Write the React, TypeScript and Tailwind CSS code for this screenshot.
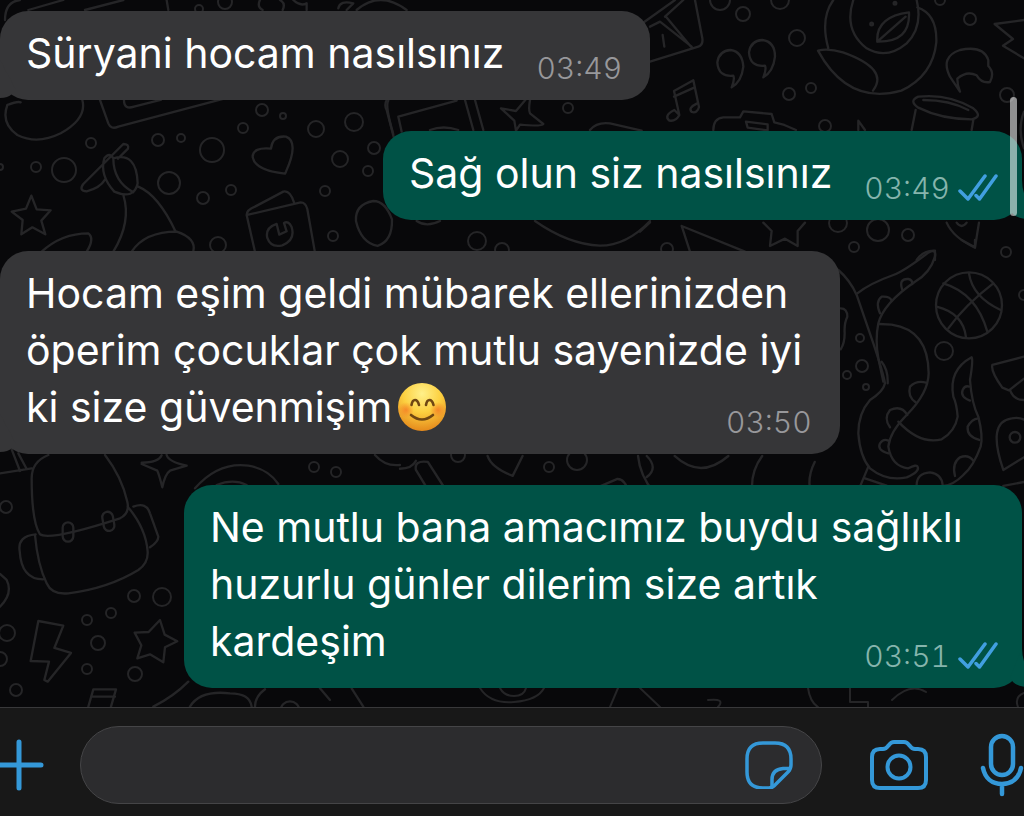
import type { ReactNode } from 'react';

interface Message {
  id: number;
  text: string;
  time: string;
  sent: boolean;
  smile?: boolean;
}

const MESSAGES: Message[] = [
  { id: 1, text: 'Süryani hocam nasılsınız', time: '03:49', sent: false },
  { id: 2, text: 'Sağ olun siz nasılsınız', time: '03:49', sent: true },
  {
    id: 3,
    text: 'Hocam eşim geldi mübarek ellerinizden öperim çocuklar çok mutlu sayenizde iyi ki size güvenmişim',
    time: '03:50',
    sent: false,
    smile: true,
  },
  {
    id: 4,
    text: 'Ne mutlu bana amacımız buydu sağlıklı huzurlu günler dilerim size artık kardeşim',
    time: '03:51',
    sent: true,
  },
];

// [cx, cy, r]
const BUBBLES = [
  [91, 143, 5], [158, 140, 6], [181, 138, 4], [212, 150, 12], [243, 128, 5], [262, 110, 6],
  [283, 116, 3], [316, 129, 8], [354, 122, 9], [374, 148, 6], [340, 159, 8], [368, 171, 5],
  [325, 191, 5], [333, 236, 5], [169, 183, 11], [203, 198, 6], [231, 190, 5], [36, 167, 5],
  [64, 170, 12], [0, 167, 3], [218, 245, 8], [225, 2, 7], [199, 9, 4], [568, 108, 5],
  [743, 14, 7], [797, 38, 8], [789, 94, 6], [811, 88, 5], [825, 126, 6], [970, 19, 6],
  [1007, 95, 7], [720, 0, 10], [780, 0, 9], [940, 0, 5], [878, 230, 11], [908, 235, 6],
  [854, 247, 5], [838, 223, 9], [1006, 252, 5], [667, 249, 6], [477, 241, 9], [502, 250, 7],
  [860, 338, 4], [862, 366, 6], [847, 375, 4], [866, 387, 3], [944, 351, 9], [1024, 295, 5],
  [314, 467, 5], [336, 472, 5], [6, 507, 6], [134, 596, 6], [162, 597, 9], [111, 613, 5],
  [87, 620, 5], [98, 643, 7], [87, 669, 5], [135, 674, 7], [7, 633, 8], [0, 659, 7],
  [16, 690, 6], [549, 467, 5], [577, 460, 10], [458, 455, 7],
];

function Wallpaper() {
  return (
    <svg
      className="absolute inset-0 h-full w-full"
      fill="none"
      stroke="#252527"
      strokeWidth="2"
      strokeLinecap="round"
      strokeLinejoin="round"
      aria-hidden="true"
    >
      {BUBBLES.map(([cx, cy, r]) => (
        <circle key={`${cx}-${cy}`} cx={cx} cy={cy} r={r} />
      ))}

      {/* top left */}
      <g transform="scale(.3333)" strokeWidth="7">
        <path d="M15 60Q15 5 60 0M85 30L190 0M255 30L370 0M500 0l5 30M780 0q-10 20 8 30M840 0q18 10 8 30M880 0q20 20 40 10v20M1015 25q5-25 45-15l-20 20M1070 30q70-60 150 0" />
        <path d="M22 315q-20 55 30 90 60 30 130-5 80-45 65-100M22 315q30-12 40-8M300 300l25 70q8 20 30 10l320-85M372 300q0 30 30 20l80-20" />
        <path d="M855 521q-90-10-97-50 0-30 55-25 5-40 45-36 40 15 0 105z" />
        <path d="M94 587l16 41 42 3-28 31 12 41-39-21-33 21 4-43-33-25 43-9z" />
        <path d="M250 552L370 432q18 0 14 14l-30 30M250 552q-15 20 10 22 40-10 55-35M340 475q70-20 73 75-10 50-70 25-45-50-30-100 15-20 27 0 0 70 60 102M370 585q25 80-30 170M415 560q60 25 112 135M395 755q40-60 135-60 60 20 50 60M125 755q60-55 140-55 20 15-5 55" />
        <path d="M765 755l-25-110q0-15 25-25l85-45q20-5 32 32M742 645l160-38q15 0 20 20l22 125M830 672q-35 12-28 42 10 30 45 22 40-15 28-55-10-20-23-12l8 25-22 10z" />
        <path d="M1120 603q-55 10-52 60 15 65 65 75 45-15 43-80-20-55-56-55zM1165 302q-10 15 15 100" />
      </g>

      {/* top right */}
      <g transform="translate(640 0) scale(.3333)" strokeWidth="7">
        <path d="M30 185l145-45q15-5 12-25L165 0M0 75L105 0M30 80l30-15 95 75M75 50l55-50M78 50l75 90M68 105l5 35" />
        <path d="M275 262q10-25 5-35-45 5-48-40 5-35 40-37 35 5 38 50-5 45-35 62zM370 232q10-25 5-35-45 5-48-40 5-35 40-37 38 5 38 50-5 45-35 62z" />
        <path d="M118 345l-16-72 58-32 17 80q-5 20-22 15-12-12 15-25M102 290l62-28M118 345q-10 20-30 17-18-15 15-32z" />
        <path d="M220 390q0-35 30-38h50l10-18 85 8 8 25 30 8 35 15M318 365l65 8v18l-60-8zM655 390v-28l20 28" />
        <path d="M565 145q-25-90 15-145M640 0q-30 90 40 145 60 35 120-15 50-50 30-130M712 125q-5-75 95-88 5 90-95 88zl85-75M832 22q60 20 57 105-10 100-105 145-160 45-250-120 30-8 75 5 140 50 90 115" />
        <circle cx="765" cy="10" r="4" />
        <circle cx="695" cy="72" r="4" />
        <path d="M960 275l-30-45q-30-60 30-80 70-15 85 30v18q20 20 5 48-25 5-40-20-30-15-58 10 0 20 8 39zM1152 60l-88 12 55 45-30 20 63 38" />
        <path d="M835 290q90-10 165 35 30 25-5 33-90 0-160-35-30-20 0-33zM850 300q80 0 135 30M815 390l12-60M995 390l5-30M1152 335q-20 50 0 110" />
        <path d="M0 695l30-28M150 755l-25-77 190 77M370 668l25 25-5 45 45-22 38 22v-45l22-25M920 668q20 45 85 75l12-75M980 668q-15 20-30 0M830 780q20-30 55-28v28" />
      </g>

      {/* gap under the first bubble */}
      <g transform="translate(360 80) scale(.3333)" strokeWidth="7">
        <path d="M80 60q-8 15 0 30l22 85M125 155l-10-45 175-48M315 60l25 90M345 60l25 90M210 150q40-15 85 0M510 60q-5 30 0 40l40 32q-5 8-70 2l-12 18-5-30-40-37 45 8 28-33M690 150q20-25 60-20l95 22" />
      </g>

      {/* gap under the second bubble */}
      <g transform="translate(400 205) scale(.3333)" strokeWidth="7">
        <path d="M50 48q30 20 70 0M405 48q100 70 195 74 80 0 150-74" />
      </g>

      {/* octopus and basketball */}
      <g transform="translate(820 240) scale(.3333)" strokeWidth="7">
        <path d="M55 90Q90 120 110 165L160 310Q190 400 195 430 190 455 150 480 115 520 115 580 120 650 150 685 200 725 260 712 300 695 293 680 290 672 265 685 215 680 205 620 210 575 260 525 325 460 326 400 325 270 215 254L178 252" />
        <path d="M112 160Q150 130 220 105 250 95 325 38 350 25 345 50 330 100 285 125 190 190 175 250 165 300 175 355L190 425M185 365Q205 390 203 430" />
        <path d="M235 545Q300 615 365 598 405 575 413 530 410 490 400 470 385 390 455 352 460 360 450 420 455 490 475 530 490 590 482 620 460 680 430 705 400 735 370 738" />
        <path d="M247 150Q235 115 265 117 278 120 277 132M180 220Q165 185 185 170 210 168 215 182M287 487Q262 470 270 440 290 420 318 428M210 562Q190 535 210 510 245 495 262 525M205 640Q170 630 180 610 190 595 205 602M450 482Q420 470 428 450 435 435 448 440M478 600Q440 590 443 560 455 537 475 535M405 708Q395 670 420 652 445 642 460 662" />
        <path d="M290 735q0-35 40-38 35 5 38 38M145 680l-25 60M135 715l65 22" />
        <circle cx="447" cy="196" r="99" />
        <path d="M447 100q10 70 95 110M370 130q100 30 132 145M385 265q50-70 135-135M350 200q80 20 88 92" />
        <path d="M612 350l-95 25q-5 20 30 68l20 8 45-35M570 450q10 30 42 30M550 690q-50-145 25-155 30-5 45 10M550 690l65-40" />
        <circle cx="585" cy="592" r="16" />
        <path d="M62 205q20 0 20 25-10 20-8 50 0 30-12 48M425 0l40 22V0M550 738l62-12" />
      </g>

      {/* backpack, bolt and star */}
      <g transform="translate(0 440) scale(.3333)" strokeWidth="7">
        <path d="M145 45q-50 20-50 70 0 130 25 168 30 20 240-48 30-15 22-50Q365 110 315 45M105 285q8 90 35 145 15 35 65 30 120-15 210-70 30-20 28-55-5-70-60-135M107 283q-55 5-48 50 5 85 70 85M400 200q40-15 50 20l25 70q0 15-25 32M0 100l95-15M35 28l25 65M55 40l25 47" />
        <rect x="188" y="247" width="32" height="58" rx="16" />
        <rect x="309" y="215" width="32" height="58" rx="16" transform="rotate(-10 325 244)" />
        <path d="M425 68q50 0 60-22M500 45q5 20 60 32l-50 15q-15 10-23 50-10-40-15-50l-47-20M585 145q70-80 160-68 60 10 90 55M650 135q50-20 90 0M0 500q40-40 20-80L0 402M1125 45q30 35 75 30" />
        <path d="M115 543l75 14-27 67 50 15-70 86-10-5 14-55-55-2z" />
        <path d="M480 540l14 44 38 20-37 18-5 45-40-24-38 12 12-39-20-38 42-2z" />
        <path d="M265 800l15-52h68l-15 52M275 770h70M460 800q60-30 105-75M570 800q30-50 120-40 60 0 65 40M765 800q0-30 30-52M960 745l30 35M1055 745l35 55" />
        <circle cx="870" cy="812" r="28" />
      </g>

      {/* gap above the last bubble */}
      <g transform="translate(400 450) scale(.398)" strokeWidth="6">
        <path d="M0 47q30 0 40-20M75 108L40 50q-5-25 30-20l50 78M220 15q10 30 63 50l25-50M470 105l75-32q20-2 30 35M598 15q5 50 40 92M620 15q30 30 0 53M690 15q65 60 135 0M910 15q-30 40-25 92M1042 30q-20 40-10 78" />
      </g>

      {/* strip over the input bar */}
      <path d="M480 688q10 16 34 14t30-14M500 688q4 8 14 8t12-8M610 707l8-19M640 688l20 19M708 700q18-2 10 7M808 688q2 14 10 19M850 688v14h18v5M892 700q18-18 34-8M1018 707q-4-10 6-14" />
    </svg>
  );
}

function Smile() {
  return (
    <svg className="-mt-2 ml-1.5 inline-block h-12 w-12 align-middle" viewBox="0 0 48 48" role="img" aria-label="😊">
      <defs>
        <radialGradient id="face" cx="50%" cy="22%" r="78%">
          <stop offset="0" stopColor="#fff08a" />
          <stop offset=".5" stopColor="#fcd040" />
          <stop offset="1" stopColor="#e58a1c" />
        </radialGradient>
        <radialGradient id="cheek">
          <stop offset="0" stopColor="#f57b25" stopOpacity=".8" />
          <stop offset="1" stopColor="#f57b25" stopOpacity="0" />
        </radialGradient>
      </defs>
      <circle cx="24" cy="24" r="24" fill="url(#face)" />
      <circle cx="8" cy="27" r="8" fill="url(#cheek)" />
      <circle cx="40" cy="27" r="8" fill="url(#cheek)" />
      <g fill="none" stroke="#6f4713" strokeWidth="2.6" strokeLinecap="round">
        <path d="M13.500 22q.8-5 3.500-5t4 5" />
        <path d="M28 22q.8-5 3.500-5t4 5" />
        <path d="M13 32q11 9 22 0" />
      </g>
    </svg>
  );
}

function Ticks() {
  return (
    <svg
      className="h-7 w-10"
      viewBox="0 0 40 28"
      fill="none"
      stroke="#419fe0"
      strokeWidth="3.500"
      strokeLinecap="round"
      strokeLinejoin="round"
      role="img"
      aria-label="Okundu"
    >
      <path d="M2 17l8 8L27 2M18 21.500l3.500 3.500L38 2" />
    </svg>
  );
}

function Tail({ sent }: { sent: boolean }) {
  return sent ? (
    <svg className="absolute -right-1 bottom-0 h-10 w-4" viewBox="0 0 16 40" fill="#005246" aria-hidden="true">
      <path d="M12 0q0 10 4 18v21q-9-1-13-5L0 30z" />
    </svg>
  ) : (
    <svg className="absolute bottom-0 left-0 h-10 w-4" viewBox="0 0 16 40" fill="#363638" aria-hidden="true">
      <path d="M0 0v38q8 0 12-4l4-4z" />
    </svg>
  );
}

function MessageBubble({ message }: { message: Message }) {
  const { text, time, sent, smile } = message;

  return (
    <li className={sent ? 'flex justify-end pr-0.5' : 'flex justify-start'}>
      <div
        className={`relative max-w-[82%] rounded-[28px] pt-[14px] pb-[18px] pl-[26px] ${
          sent ? 'bg-[#005246] pr-6' : 'bg-[#363638] pr-7'
        }`}
      >
        <Tail sent={sent} />
        <p className="relative text-[41px] leading-[57px] text-white">
          {text}
          {smile && <Smile />}
          {/* floats to the end of the last line */}
          <span
            className={`float-right mt-[31px] ml-8 flex h-6 items-center gap-2 text-[30px] leading-6 font-light tabular-nums ${
              sent ? 'text-[#86b5ad]' : 'text-[#98989b]'
            }`}
          >
            <time>{time}</time>
            {sent && <Ticks />}
          </span>
        </p>
      </div>
    </li>
  );
}

function IconButton({ label, className, children }: { label: string; className?: string; children: ReactNode }) {
  return (
    <button type="button" aria-label={label} className={`shrink-0 text-[#3498d8] ${className ?? ''}`}>
      {children}
    </button>
  );
}

function Composer() {
  return (
    <footer className="flex items-center border-t border-[#38383a] bg-[#181818] pt-[18px] pb-3">
      <IconButton label="Ekle" className="-ml-1.5">
        <svg className="h-[52px] w-[50px]" viewBox="0 0 50 52" stroke="currentColor" strokeWidth="5" strokeLinecap="round">
          <path d="M3 26h44M25 3v46" />
        </svg>
      </IconButton>
      <div className="ml-9 flex h-[78px] min-w-0 flex-1 items-center rounded-full border border-[#454547] bg-[#2c2c2e] pr-7 pl-8">
        <input aria-label="Mesaj" className="min-w-0 flex-1 bg-transparent text-[41px] text-white outline-none" />
        <IconButton label="Çıkartma">
          <svg className="h-12 w-12" viewBox="0 0 48 48" fill="none" stroke="currentColor" strokeWidth="3.500" strokeLinejoin="round">
            <path d="M18 2h12q16 0 16 16v6q0 4-3 7L31 43q-3 4-7 4h-6Q2 47 2 31V18Q2 2 18 2z" />
            <path d="M46 27.500h-8q-11 1-11 11V46" />
          </svg>
        </IconButton>
      </div>
      <IconButton label="Kamera" className="ml-12">
        <svg className="h-[50px] w-[58px]" viewBox="0 0 58 50" fill="none" stroke="currentColor" strokeWidth="4" strokeLinejoin="round">
          <path d="M10 9h3q3 0 5-3l1-1q2-3 5-3h10q3 0 5 3l1 1q2 3 5 3h3q8 0 8 8v23q0 8-8 8H10q-8 0-8-8V17q0-8 8-8z" />
          <circle cx="29" cy="27" r="11.500" />
        </svg>
      </IconButton>
      <IconButton label="Ses kaydı" className="ml-[52px]">
        <svg className="h-16 w-11" viewBox="0 0 44 64" fill="none" stroke="currentColor" strokeWidth="4.500" strokeLinecap="round">
          <rect x="11" y="3" width="22" height="39" rx="11" />
          <path d="M3 35c2 10 9 16 19 16s17-6 19-16M22 51v10" />
        </svg>
      </IconButton>
    </footer>
  );
}

export default function App() {
  return (
    <div className="flex min-h-screen flex-col overflow-hidden bg-[#08080a] font-['Inter','Liberation_Sans',sans-serif]">
      <main className="relative flex-1 overflow-hidden pt-[11px] pb-[19px]">
        <Wallpaper />
        <ul className="relative flex flex-col gap-[31px]">
          {MESSAGES.map((message) => (
            <MessageBubble key={message.id} message={message} />
          ))}
        </ul>
        {/* scroll position */}
        <div className="absolute top-[97px] right-[7px] h-[119px] w-[7px] rounded-full bg-white/55" />
      </main>
      <Composer />
    </div>
  );
}
